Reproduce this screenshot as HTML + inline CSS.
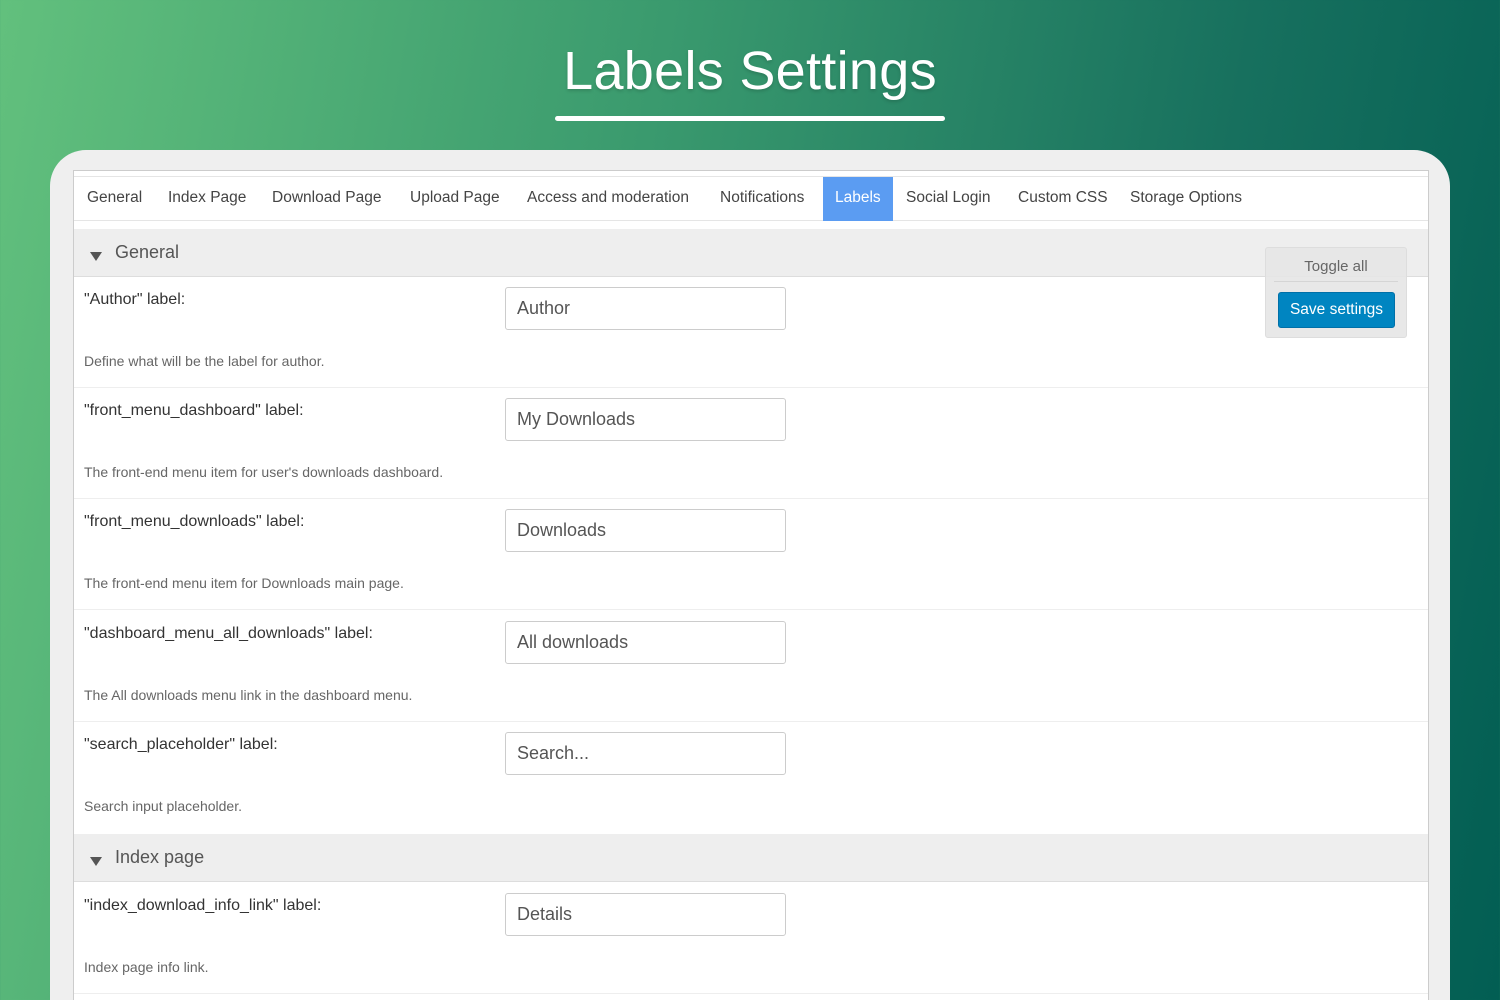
<!DOCTYPE html>
<html style="width:1500px;height:1000px;overflow:hidden"><head><meta charset="utf-8"><style>
*{box-sizing:border-box;margin:0;padding:0}
body{width:1500px;height:1000px;overflow:hidden;font-family:"Liberation Sans",sans-serif;background:linear-gradient(100deg,#62c07d 0%,#3a9a6e 40%,#17705e 75%,#025e53 100%);position:relative}
.title{position:absolute;left:0;width:1500px;top:40px;text-align:center;color:#fff;font-size:54px;letter-spacing:0.3px;text-shadow:0 2px 3px rgba(0,0,0,.15)}
.ul{position:absolute;left:555px;top:116px;width:390px;height:5px;background:#fff;border-radius:3px}
.panel{position:absolute;left:50px;top:150px;width:1400px;height:900px;background:#efefef;border-radius:36px}
.box{position:absolute;left:73px;top:170px;width:1356px;height:830px;background:#fff;border:1px solid #ccc;border-bottom:none}
.tabs{position:absolute;left:0;top:5px;width:1354px;height:45px;border-top:1px solid #e5e5e5;border-bottom:1px solid #e5e5e5;font-size:15.5px;color:#444}
.tab{position:absolute;top:0;height:44px;line-height:42px}
.tab.act{background:#5b9cf2;color:#fff;padding:0 12px}
.sec{position:absolute;left:0;width:1354px;height:48px;background:#eee;border-bottom:1px solid #ddd;font-size:18px;color:#555}
.sec span{position:absolute;left:41px;top:13px}
.sec i{position:absolute;left:16px;top:23px;width:0;height:0;border-left:6px solid transparent;border-right:6px solid transparent;border-top:9px solid #555}
.row{position:absolute;left:0;width:1354px;height:111px;border-bottom:1px solid #eee}
.lab{position:absolute;left:10px;top:14px;font-size:16px;color:#333}
.desc{position:absolute;left:10px;top:76px;font-size:14px;color:#666}
.inp{position:absolute;left:431px;top:10px;width:281px;height:43px;border:1px solid #ccc;border-radius:3px;font-size:18px;color:#555;padding:10px 11px}
.tg{position:absolute;left:1265px;top:247px;width:142px;height:91px;background:rgba(230,230,230,.9);border:1px solid #ddd;border-radius:3px}
.tg .t{position:absolute;left:0;width:140px;top:10px;text-align:center;font-size:15px;color:#666}
.tg .ln{position:absolute;left:8px;right:8px;top:33px;border-top:1px solid #d5d5d5}
.btn{position:absolute;left:12px;top:44px;width:117px;height:36px;background:#0085c1;border:1px solid #0070a8;border-radius:3px;color:#fff;font-size:15.5px;text-align:center;line-height:34px}
</style></head><body>
<div class="title">Labels Settings</div><div class="ul"></div>
<div class="panel"></div>
<div class="box">
<div class="tabs">
<div class="tab" style="left:13px">General</div>
<div class="tab" style="left:94px">Index Page</div>
<div class="tab" style="left:198px">Download Page</div>
<div class="tab" style="left:336px">Upload Page</div>
<div class="tab" style="left:453px">Access and moderation</div>
<div class="tab" style="left:646px">Notifications</div>
<div class="tab act" style="left:749px">Labels</div>
<div class="tab" style="left:832px">Social Login</div>
<div class="tab" style="left:944px">Custom CSS</div>
<div class="tab" style="left:1056px">Storage Options</div>
</div>
<div class="sec" style="top:58px"><i></i><span>General</span></div>
<div class="row" style="top:106px"><div class="lab">"Author" label:</div><div class="inp">Author</div><div class="desc">Define what will be the label for author.</div></div>
<div class="row" style="top:217px"><div class="lab">"front_menu_dashboard" label:</div><div class="inp">My Downloads</div><div class="desc">The front-end menu item for user's downloads dashboard.</div></div>
<div class="row" style="top:328px"><div class="lab">"front_menu_downloads" label:</div><div class="inp">Downloads</div><div class="desc">The front-end menu item for Downloads main page.</div></div>
<div class="row" style="top:440px"><div class="lab">"dashboard_menu_all_downloads" label:</div><div class="inp">All downloads</div><div class="desc">The All downloads menu link in the dashboard menu.</div></div>
<div class="row" style="top:551px;border-bottom:none"><div class="lab">"search_placeholder" label:</div><div class="inp">Search...</div><div class="desc">Search input placeholder.</div></div>
<div class="sec" style="top:663px"><i></i><span>Index page</span></div>
<div class="row" style="top:712px"><div class="lab">"index_download_info_link" label:</div><div class="inp">Details</div><div class="desc">Index page info link.</div></div>
</div>
<div class="tg"><div class="t">Toggle all</div><div class="ln"></div><div class="btn">Save settings</div></div>
</body></html>
